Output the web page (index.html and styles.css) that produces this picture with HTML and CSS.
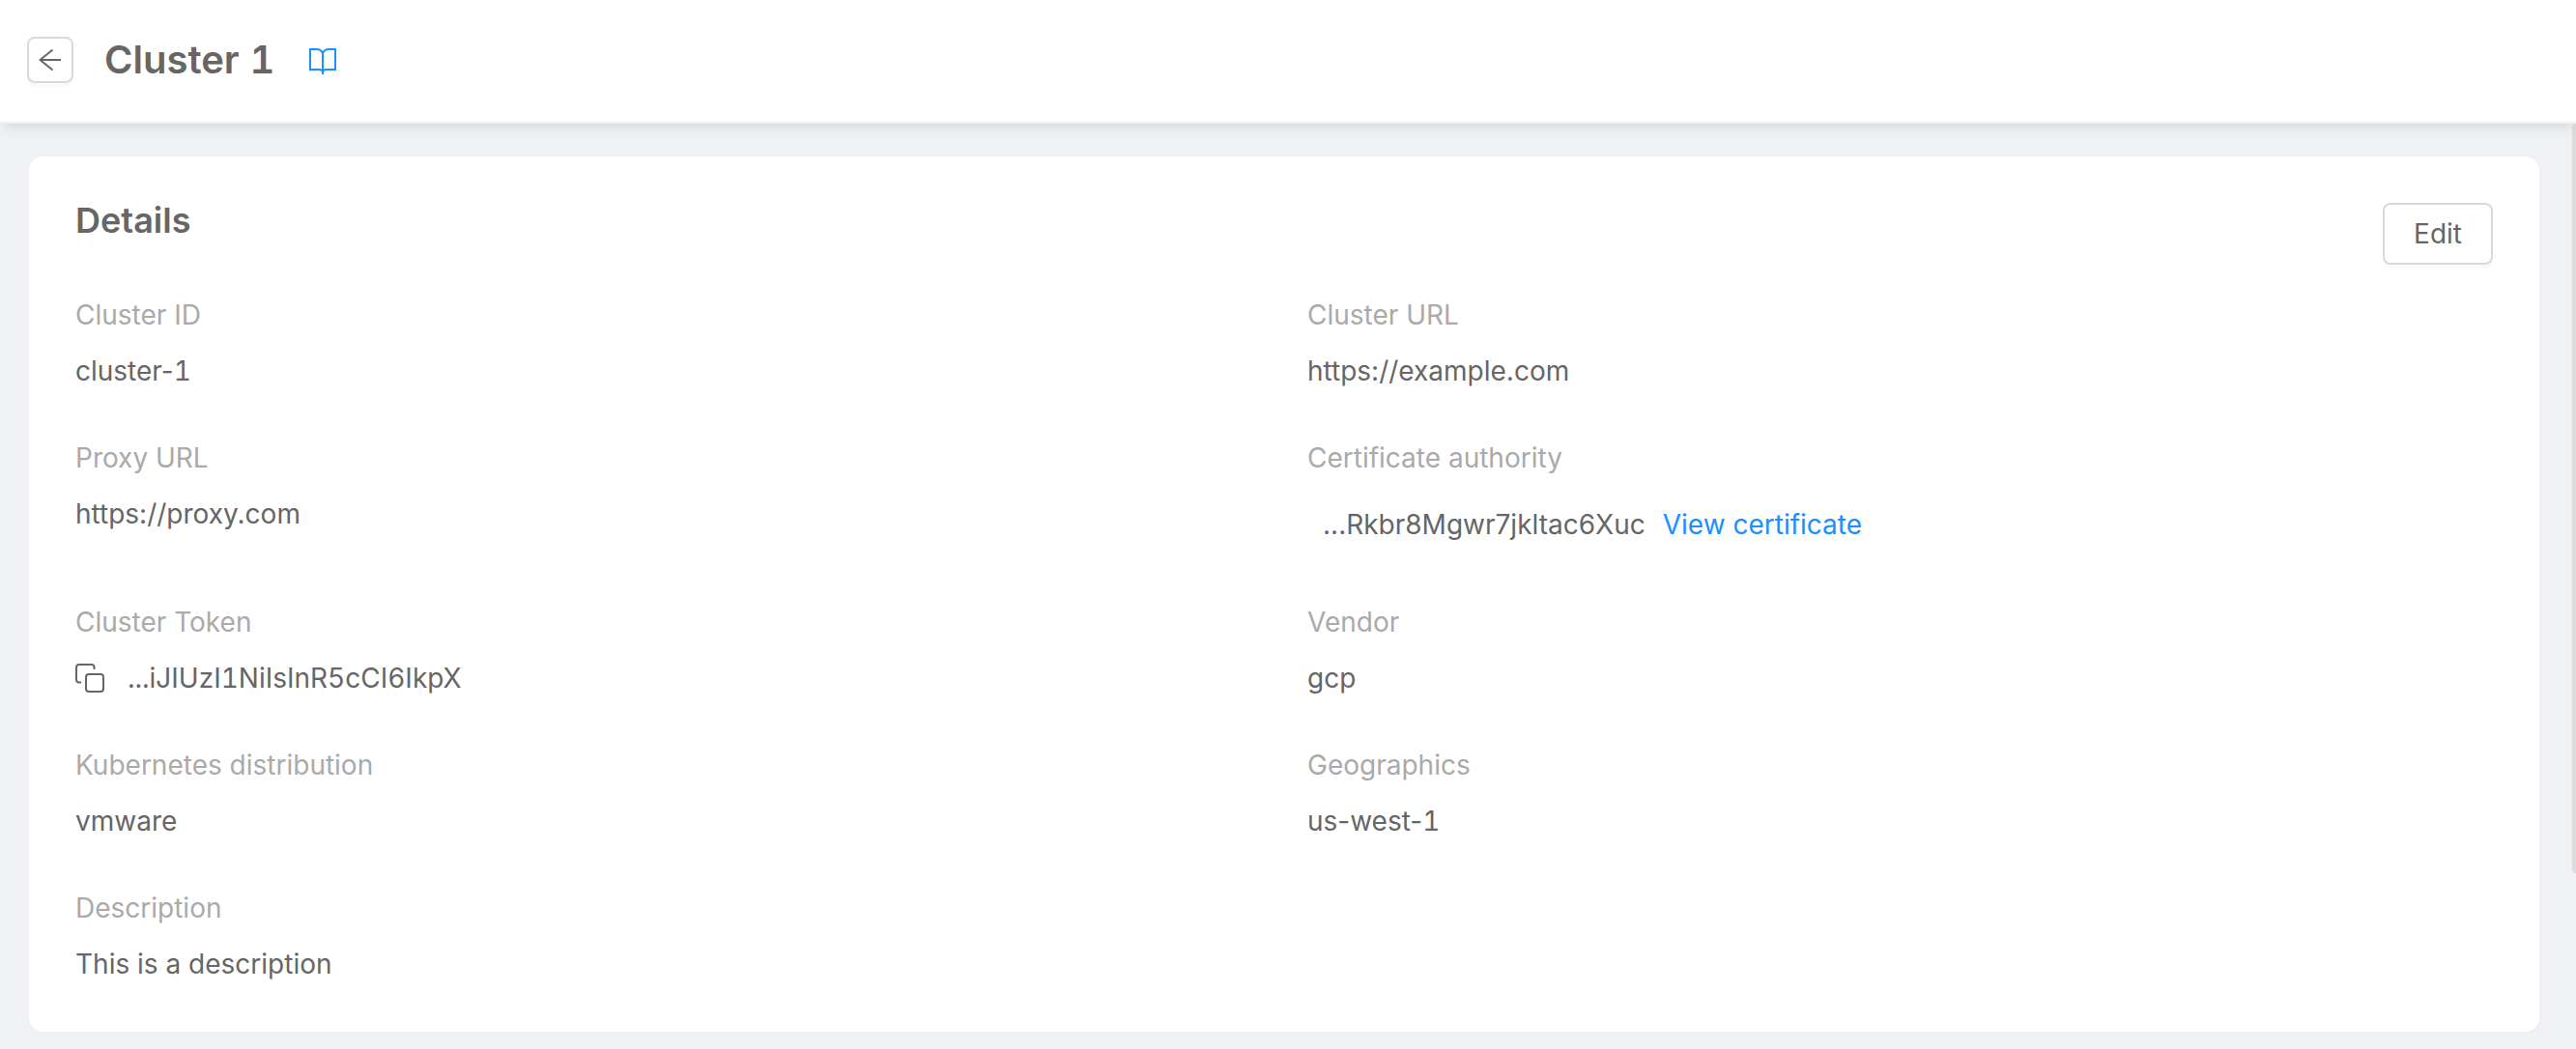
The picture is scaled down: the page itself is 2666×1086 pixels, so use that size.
FILE: index.html
```html
<!DOCTYPE html>
<html lang="en">
<head>
<meta charset="utf-8">
<title>Cluster 1</title>
<link rel="stylesheet" href="styles.css">
</head>
<body>
<header class="page-header">
  <button class="back-button" type="button" aria-label="Back">
    <svg width="24" height="24" viewBox="0 0 24 24"><path d="M14.500 1.500L1.500 12l13 10.500M1.500 12H23" fill="none" stroke="currentColor" stroke-width="2"/></svg>
  </button>
  <h1 class="page-title">Cluster 1</h1>
  <a class="docs-link" href="#" aria-label="Documentation">
    <svg width="28" height="28" viewBox="0 0 28 28"><path d="M14 5C12.500 2 10.500 1 8 1H1v21h9c2 0 4 1 4 3 0-2 2-3 4-3h9V1h-7c-2.500 0-4.500 1-6 4zM14 5v22" fill="none" stroke="currentColor" stroke-width="2"/></svg>
  </a>
</header>
<main class="content">
  <section class="card">
    <div class="card-header">
      <h2 class="card-title">Details</h2>
      <button class="edit-button" type="button">Edit</button>
    </div>
    <dl class="details">
      <div class="field"><dt>Cluster ID</dt><dd>cluster-<span class="number">1</span></dd></div>
      <div class="field"><dt>Cluster URL</dt><dd>https://example.com</dd></div>
      <div class="field"><dt>Proxy URL</dt><dd>https://proxy.com</dd></div>
      <div class="field"><dt>Certificate authority</dt><dd class="certificate"><span>...Rkbr8Mgwr7jkltac6Xuc</span><a class="link" href="#">View certificate</a></dd></div>
      <div class="field"><dt>Cluster Token</dt><dd class="token">
        <button class="copy-button" type="button" aria-label="Copy token"><svg width="30" height="30" viewBox="0 0 30 30"><g fill="none" stroke="currentColor" stroke-width="2"><rect x="11" y="11" width="18" height="18" rx="3"/><path d="M19.500 6V4a3 3 0 0 0-3-3H4a3 3 0 0 0-3 3v12.500a3 3 0 0 0 3 3h2"/></g></svg></button>
        <span class="number">...iJIUzI1NiIsInR5cCI6IkpX</span></dd></div>
      <div class="field"><dt>Vendor</dt><dd>gcp</dd></div>
      <div class="field"><dt>Kubernetes distribution</dt><dd>vmware</dd></div>
      <div class="field"><dt>Geographics</dt><dd>us-west-<span class="number">1</span></dd></div>
      <div class="field"><dt>Description</dt><dd>This is a description</dd></div>
    </dl>
  </section>
  <div class="scroll-thumb"></div>
</main>
</body>
</html>
```
FILE: styles.css
```css
* {
  box-sizing: border-box;
}

body {
  margin: 0;
  min-height: 100vh;
  display: flex;
  flex-direction: column;
  background: #f0f1f5;
  color: #666;
  font: 28px/44px Inter, "Liberation Sans", sans-serif;
}

h1, h2, dl, dd {
  margin: 0;
}

button {
  padding: 0;
  background: #fff;
  color: inherit;
  font: inherit;
}

svg {
  display: block;
}

.number,
.page-title {
  font-variant-numeric: tabular-nums;
}

.page-header {
  position: relative;
  z-index: 1;
  display: flex;
  align-items: center;
  padding: 38px 28px 40px;
  background: #fff;
  border-bottom: 2px solid #f0f1f5;
  box-shadow: 0 8px 12px -4px rgba(0, 0, 0, 0.1);
}

.back-button,
.edit-button {
  border: 2px solid #d9d9d9;
  border-radius: 8px;
  box-shadow: 0 4px 0 rgba(0, 0, 0, 0.02);
}

.back-button {
  display: grid;
  place-items: center;
  width: 48px;
  height: 48px;
}

.page-title {
  margin-left: 32px;
  font-size: 40px;
  line-height: 48px;
  font-weight: 600;
}

.docs-link {
  margin-left: 36px;
  padding-top: 4px;
  color: #1890ff;
}

.content {
  position: relative;
  flex: 1;
  padding: 32px 36px 16px 28px;
}

.card {
  padding: 48px;
  background: #fff;
  background-clip: padding-box;
  border: 2px solid #f0f0f0;
  border-radius: 16px;
}

.card-header {
  display: flex;
  justify-content: space-between;
  align-items: flex-start;
  margin-bottom: 30px;
}

.card-title {
  font-size: 36px;
  line-height: 36px;
  font-weight: 600;
}

.edit-button {
  height: 64px;
  padding: 0 30px;
}

.details {
  display: grid;
  grid-template-columns: 1fr 1fr;
  gap: 46px 48px;
}

.field {
  display: grid;
  gap: 14px;
  align-content: start;
}

.field dt {
  color: #aaa;
}

.certificate {
  display: flex;
  padding-left: 16px;
  gap: 18px;
  line-height: 66px;
}

.link {
  color: #1890ff;
  text-decoration: none;
}

.token {
  display: flex;
  align-items: center;
  gap: 24px;
}

.copy-button {
  border: 0;
}

.scroll-thumb {
  position: absolute;
  top: 0;
  right: 0;
  width: 4px;
  height: 81%;
  background: #dcdcdc;
  border-radius: 4px 0 0 4px;
}
```
